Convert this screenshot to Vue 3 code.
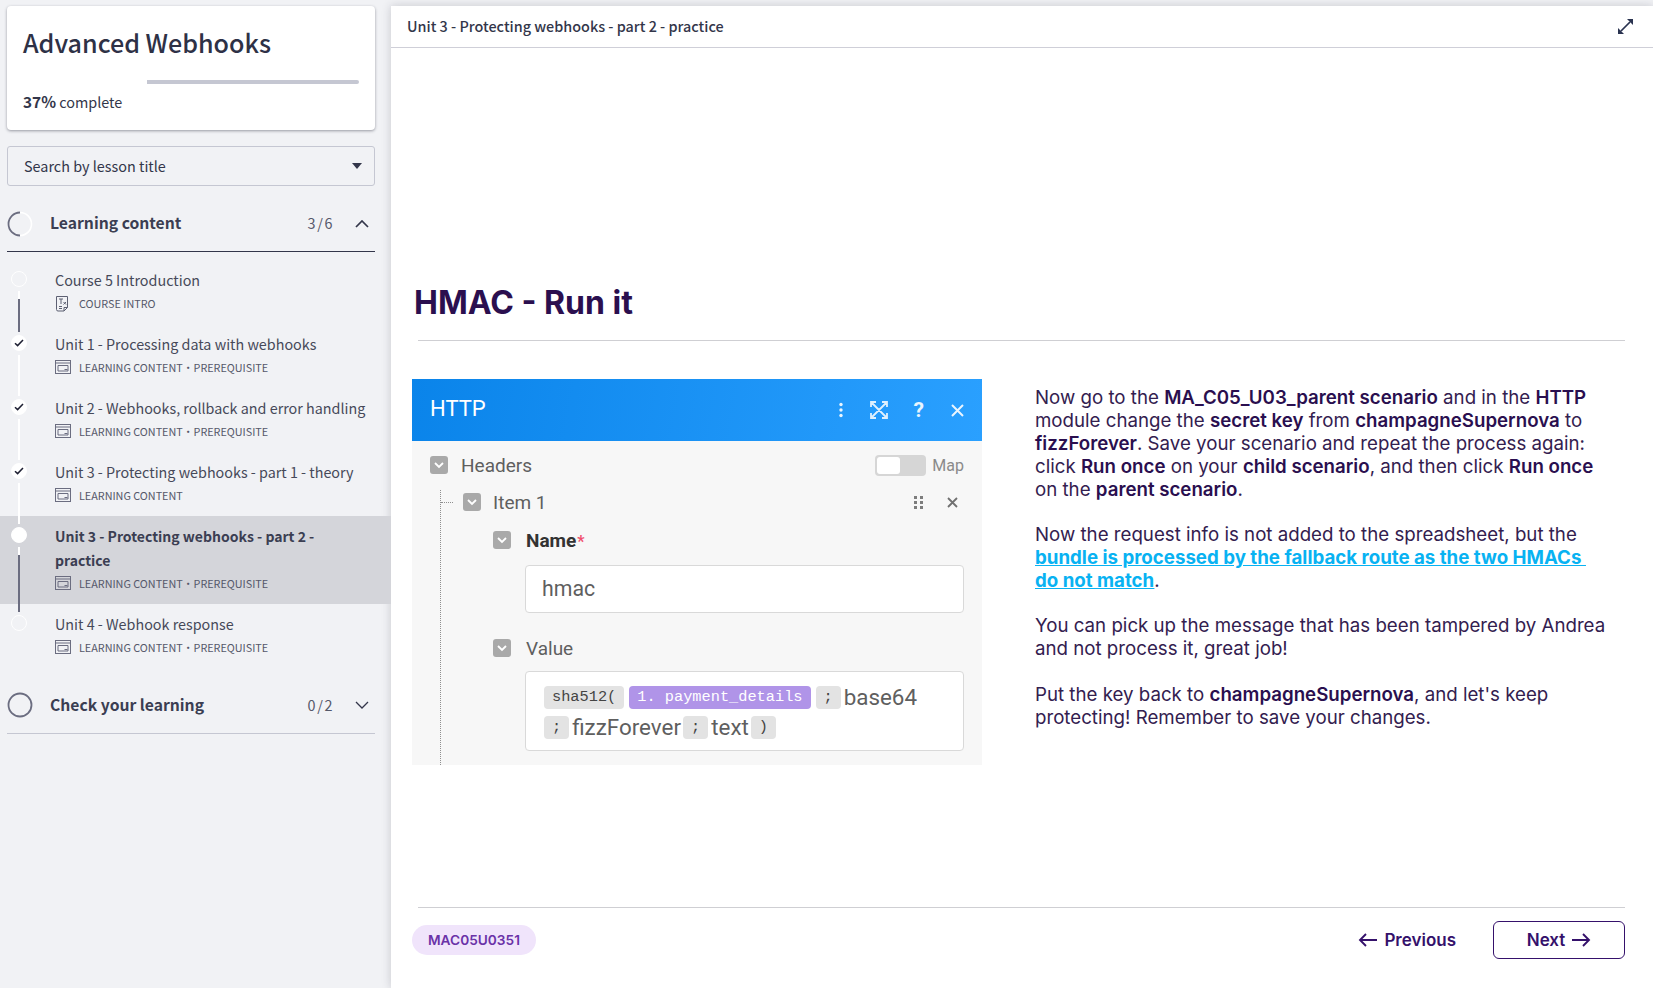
<script setup>
const lessons = [
  { title: 'Course 5 Introduction', meta: ['COURSE INTRO'], icon: 'doc', state: 'open', line: 'dark' },
  { title: 'Unit 1 - Processing data with webhooks', meta: ['LEARNING CONTENT', 'PREREQUISITE'], icon: 'lesson', state: 'done', line: 'light' },
  { title: 'Unit 2 - Webhooks, rollback and error handling', meta: ['LEARNING CONTENT', 'PREREQUISITE'], icon: 'lesson', state: 'done', line: 'light' },
  { title: 'Unit 3 - Protecting webhooks - part 1 - theory', meta: ['LEARNING CONTENT'], icon: 'lesson', state: 'done', line: 'light' },
  { title: 'Unit 3 - Protecting webhooks - part 2 - practice', meta: ['LEARNING CONTENT', 'PREREQUISITE'], icon: 'lesson', state: 'current', line: 'dark', active: true },
  { title: 'Unit 4 - Webhook response', meta: ['LEARNING CONTENT', 'PREREQUISITE'], icon: 'lesson', state: 'open', line: 'none' }
]
</script>

<template>
  <div class="page">
    <aside class="sidebar">
      <section class="card">
        <h2 class="course">Advanced Webhooks</h2>
        <div class="track"><div class="done-part"></div><div class="rest-part"></div></div>
        <p class="percent"><b>37%</b> complete</p>
      </section>

      <div class="select">
        <span class="nudge">Search by lesson title</span>
        <svg width="10" height="6" viewBox="0 0 10 6"><path d="M0 0h10L5 6z" fill="#33364a" /></svg>
      </div>

      <div class="section-head open">
        <svg class="ring" width="26" height="26" viewBox="0 0 26 26">
          <circle cx="13" cy="13" r="11.5" fill="none" stroke="#fff" stroke-width="1.6" />
          <path d="M13 24.5A11.5 11.5 0 0 1 13 1.5" fill="none" stroke="#6b6d80" stroke-width="1.8" />
        </svg>
        <span class="section-title nudge">Learning content</span>
        <span class="count nudge">3/6</span>
        <svg class="chev" width="14" height="8" viewBox="0 0 14 8"><path d="M1 7l6-6 6 6" fill="none" stroke="#33364a" stroke-width="1.7" /></svg>
      </div>

      <ul class="lessons">
        <li v-for="l in lessons" :key="l.title" class="lesson" :class="{ active: l.active }">
          <div class="rail">
            <span class="dot" :class="l.state">
              <svg v-if="l.state === 'done'" width="10" height="8" viewBox="0 0 10 8"><path d="M1 4.2l2.6 2.4L9 1" fill="none" stroke="#1e2033" stroke-width="1.5" /></svg>
            </span>
            <span v-if="l.line !== 'none'" class="line" :class="l.line"></span>
          </div>
          <div class="lesson-body">
            <div class="lesson-title">{{ l.title }}</div>
            <div class="meta">
              <svg v-if="l.icon === 'doc'" class="meta-icon doc" width="16" height="17" viewBox="0 0 16 17" fill="none" stroke="#5d6072" stroke-width="1">
                <path d="M1.500 1.500h11v11l-3.500 3.500H3a1.500 1.500 0 0 1-1.500-1.500z" />
                <path d="M12.500 12.500H9V16" />
                <path d="M4 4h4M6 4v5M8.500 7l2.500 2.500M11 7l-2.500 2.500M4 11.500h3M4 13.500h3" />
              </svg>
              <svg v-else class="meta-icon" width="16" height="14" viewBox="0 0 16 14" fill="none" stroke="#6b6d80" stroke-width="1">
                <rect x="0.500" y="0.500" width="15" height="13" />
                <path d="M0.500 3h15" />
                <path d="M3 5.500h10v5.500H3z" />
                <path d="M9.500 9.500h3" />
              </svg>
              <template v-for="(m, i) in l.meta" :key="m">
                <span v-if="i" class="sep">·</span>
                <span>{{ m }}</span>
              </template>
            </div>
          </div>
        </li>
      </ul>

      <div class="section-head last">
        <svg class="ring" width="26" height="26" viewBox="0 0 26 26">
          <circle cx="13" cy="13" r="11.500" fill="none" stroke="#6b6d80" stroke-width="1.800" />
        </svg>
        <span class="section-title nudge">Check your learning</span>
        <span class="count nudge">0/2</span>
        <svg class="chev" width="14" height="8" viewBox="0 0 14 8"><path d="M1 1l6 6 6-6" fill="none" stroke="#33364a" stroke-width="1.300" /></svg>
      </div>
    </aside>

    <main class="main">
      <header class="topbar">
        <span class="crumb">Unit 3 - Protecting webhooks - part 2 - practice</span>
        <svg width="17" height="17" viewBox="0 0 17 17" fill="none">
          <path d="M4 13L13 4" stroke="#2a3350" stroke-width="1.700" />
          <path d="M10 1h6v6z" fill="#2a3350" />
          <path d="M1 10v6h6z" fill="#2a3350" />
        </svg>
      </header>

      <div class="lesson-page">
        <h1>HMAC - Run it</h1>
        <hr class="rule" />

        <div class="columns">
          <div class="shot">
            <div class="shot-head">
              <span class="shot-title">HTTP</span>
              <span class="shot-icons">
                <svg width="6" height="16" viewBox="0 0 6 16"><g fill="#fff" opacity=".9"><circle cx="3" cy="2.500" r="1.700" /><circle cx="3" cy="8" r="1.700" /><circle cx="3" cy="13.500" r="1.700" /></g></svg>
                <svg class="ic-exp" width="18" height="18" viewBox="0 0 18 18" fill="none" stroke="#fff" stroke-width="1.800" opacity=".85"><path d="M1 6V1h5M12 1h5v5M17 12v5h-5M6 17H1v-5M2 2l14 14M16 2L2 16" /></svg>
                <span class="ic-q">?</span>
                <svg class="ic-x" width="13" height="13" viewBox="0 0 13 13" fill="none" stroke="#fff" stroke-width="2" opacity=".9"><path d="M1 1l11 11M12 1L1 12" /></svg>
              </span>
            </div>

            <div class="shot-body">
              <div class="row headers-row">
                <span class="tick"><svg width="10" height="7" viewBox="0 0 10 7"><path d="M1 1l4 4 4-4" fill="none" stroke="#fff" stroke-width="1.800" /></svg></span>
                <span class="lab">Headers</span>
                <span class="toggle"><i></i></span>
                <span class="map">Map</span>
              </div>

              <div class="tree">
                <div class="row item-row">
                  <span class="dash"></span>
                  <span class="tick"><svg width="10" height="7" viewBox="0 0 10 7"><path d="M1 1l4 4 4-4" fill="none" stroke="#fff" stroke-width="1.800" /></svg></span>
                  <span class="lab">Item 1</span>
                  <svg class="grip" width="9" height="13" viewBox="0 0 9 13"><g fill="#7d7d7d"><rect width="3" height="3" /><rect x="6" width="3" height="3" /><rect y="5" width="3" height="3" /><rect x="6" y="5" width="3" height="3" /><rect y="10" width="3" height="3" /><rect x="6" y="10" width="3" height="3" /></g></svg>
                  <svg class="item-x" width="11" height="11" viewBox="0 0 11 11" fill="none" stroke="#707070" stroke-width="1.800"><path d="M1 1l9 9M10 1l-9 9" /></svg>
                </div>

                <div class="field">
                  <div class="row name-row">
                    <span class="tick"><svg width="10" height="7" viewBox="0 0 10 7"><path d="M1 1l4 4 4-4" fill="none" stroke="#fff" stroke-width="1.800" /></svg></span>
                    <span class="lab strong">Name<em>*</em></span>
                  </div>
                  <div class="input">hmac</div>
                  <div class="row value-row">
                    <span class="tick"><svg width="10" height="7" viewBox="0 0 10 7"><path d="M1 1l4 4 4-4" fill="none" stroke="#fff" stroke-width="1.800" /></svg></span>
                    <span class="lab value-lab">Value</span>
                  </div>
                  <div class="value-box">
                    <div class="chips">
                      <span class="chip">sha512(</span>
                      <span class="chip purple">1. payment_details</span>
                      <span class="chip">;</span>
                      <span class="plain">base64</span>
                    </div>
                    <div class="chips">
                      <span class="chip">;</span>
                      <span class="plain">fizzForever</span>
                      <span class="chip">;</span>
                      <span class="plain">text</span>
                      <span class="chip">)</span>
                    </div>
                  </div>
                </div>
              </div>
            </div>
          </div>

          <div class="copy">
            <p>Now go to the <b>MA_C05_U03_parent scenario</b> and in the <b>HTTP</b><br />module change the <b>secret key</b> from <b>champagneSupernova</b> to<br /><b>fizzForever</b>. Save your scenario and repeat the process again:<br />click <b>Run once</b> on your <b>child scenario</b>, and then click <b>Run once</b><br />on the <b>parent scenario</b>.</p>
            <p>Now the request info is not added to the spreadsheet, but the<br /><a><b>bundle is processed by the fallback route as the two HMACs&nbsp;<br />do not match</b></a>.</p>
            <p>You can pick up the message that has been tampered by Andrea<br />and not process it, great job!</p>
            <p>Put the key back to <b>champagneSupernova</b>, and let's keep<br />protecting! Remember to save your changes.</p>
          </div>
        </div>

        <hr class="rule foot-rule" />
        <footer class="foot">
          <span class="badge">MAC05U0351</span>
          <span class="prev">
            <svg width="20" height="14" viewBox="0 0 20 14" fill="none" stroke="#35116b" stroke-width="1.900"><path d="M19 7H2M8 1L2 7l6 6" /></svg>
            Previous
          </span>
          <span class="next">
            Next
            <svg width="20" height="14" viewBox="0 0 20 14" fill="none" stroke="#35116b" stroke-width="1.900"><path d="M1 7h17M12 1l6 6-6 6" /></svg>
          </span>
        </footer>
      </div>
    </main>
  </div>
</template>

<style>
html, body { margin: 0; background: #f1f2f5; }
</style>

<style scoped>
.page { display: flex; height: 988px; width: 1653px; overflow: hidden; background: #f1f2f5; font-family: "Noto Sans CJK SC", "Noto Sans", sans-serif; color: #33364a; }
.sidebar { width: 391px; flex: none; padding-top: 6px; box-sizing: border-box; }
.card { margin-left: 7px; width: 368px; height: 124px; box-sizing: border-box; background: #fff; border-radius: 4px; box-shadow: 0 1px 3px rgba(40, 42, 60, .45); padding: 0 16px; overflow: hidden; }
.course { margin: 18px 0 0; font-size: 25.100px; line-height: 37px; font-weight: 500; color: #2e3146; }
.track { display: flex; height: 4px; margin-top: 19px; border-radius: 2px; }
.done-part { width: 124px; background: #fff; }
.rest-part { flex: 1; background: #c5c7d2; border-radius: 0 2px 2px 0; }
.percent { margin: 6px 0 0; font-size: 14.400px; line-height: 22px; }
.percent b { font-weight: 700; font-size: 15.400px; }
.select { margin: 16px 0 0 7px; width: 368px; height: 40px; box-sizing: border-box; border: 1px solid #c5c7d2; border-radius: 3px; display: flex; align-items: center; justify-content: space-between; padding: 0 12px 0 16px; font-size: 14.400px; }
.nudge { margin-top: -2px; }
.section-head { margin-left: 7px; width: 368px; height: 56px; box-sizing: border-box; border-bottom: 1px solid #c5c7d2; display: flex; align-items: center; }
.section-head.open { margin-top: 10px; border-bottom-color: #33364a; }
.section-head.last { height: 57px; }
.ring { flex: none; margin-right: 17px; }
.section-title { font-size: 15.700px; font-weight: 700; flex: 1; color: #3b3e52; }
.count { font-size: 14.400px; letter-spacing: 1.600px; color: #55586a; margin-right: 21px; }
.chev { margin-right: 6px; }
.lessons { list-style: none; margin: 0; padding: 8px 0 9px; }
.lesson { display: flex; position: relative; }
.lesson.active { background: #d4d5da; }
.rail { width: 55px; flex: none; display: flex; flex-direction: column; align-items: center; padding: 11px 17px 0 0; box-sizing: border-box; }
.dot { width: 16px; height: 16px; flex: none; box-sizing: border-box; border-radius: 50%; background: transparent; border: 1px solid #fff; display: flex; align-items: center; justify-content: center; }
.dot.done, .dot.current { background: #fff; }
.line { width: 2px; flex: 1; margin: 4px 0 -8px; background: #fff; position: relative; z-index: 1; }
.line.dark { background: linear-gradient(#fff 0 8px, #6b6d80 8px); }
.lesson-body { padding: 8px 16px 12px 0; flex: 1; min-width: 0; }
.lesson-title { font-size: 14.350px; line-height: 24px; color: #464959; }
.active .lesson-title { font-size: 14px; font-weight: 700; color: #3b3e52; padding-right: 40px; }
.meta { margin-top: 2px; display: flex; align-items: center; height: 18px; font-size: 10.800px; color: #55586a; }
.meta-icon { margin-right: 8px; flex: none; }
.sep { margin: 0; }

.main { flex: 1; margin-top: 6px; min-width: 0; background: #fff; box-shadow: 0 0 9px rgba(50, 52, 70, .22); display: flex; flex-direction: column; }
.topbar { height: 42px; flex: none; box-sizing: border-box; border-bottom: 1px solid #cfcfd8; display: flex; align-items: center; justify-content: space-between; padding: 0 19px 0 16px; font-size: 14.400px; font-weight: 500; color: #33364a; }
.crumb { margin-top: -2px; }
.lesson-page { flex: 1; display: flex; flex-direction: column; padding: 0 28px 0 21px; font-family: Inter, sans-serif; color: #2d1152; }
h1 { margin: 235px 0 0 2px; font-size: 32px; line-height: 40px; font-weight: 700; color: #2b0f4f; }
.rule { margin: 17px 0 0 6px; border: 0; border-top: 1px solid #cfcfd3; }
.columns { display: flex; margin-top: 38px; height: 528px; }
.shot { width: 570px; height: 386px; flex: none; background: #f7f7f7; font-family: Roboto, Inter, sans-serif; color: #5f5f5f; }
.shot-head { height: 62px; background: linear-gradient(100deg, #0a84ea, #2aa0ff); color: #fff; display: flex; align-items: center; justify-content: space-between; padding: 0 18px 0 18px; }
.shot-title { font-size: 22px; margin-top: -4px; }
.shot-icons { display: flex; align-items: center; }
.ic-exp { margin-left: 26px; }
.ic-q { margin-left: 26px; font-size: 21px; font-weight: 700; opacity: .9; }
.ic-x { margin-left: 27px; }
.shot-body { padding: 0 18px 0 18px; }
.row { display: flex; align-items: center; }
.tick { width: 18px; height: 18px; flex: none; border-radius: 3px; background: #a9a9a9; display: flex; align-items: center; justify-content: center; }
.lab { font-size: 19px; margin-left: 13px; }
.strong { font-weight: 700; color: #333; margin-left: 15px; }
.strong em { color: #f0506e; font-style: normal; font-size: 16px; margin-left: 1px; }
.value-lab { margin-left: 15px; }
.headers-row { height: 24px; margin-top: 12px; }
.headers-row .lab { flex: 1; }
.toggle { width: 51px; height: 21px; box-sizing: border-box; border-radius: 4px; background: #d6d6d6; padding: 2px; }
.toggle i { display: block; width: 23px; height: 17px; border-radius: 3px; background: #fff; }
.map { font-size: 16px; margin-left: 6px; color: #8a8a8a; }
.tree { margin: 13px 0 0 10px; height: 275px; border-left: 1px dotted #8f8f8f; }
.item-row { height: 24px; }
.dash { width: 12px; border-top: 1px dotted #8f8f8f; margin-right: 10px; }
.item-row .lab { flex: 1; margin-left: 12px; }
.grip { margin-right: 24px; }
.item-x { margin-right: 6px; }
.field { margin-left: 52px; }
.name-row { height: 24px; margin-top: 14px; }
.name-row .tick, .value-row .tick { margin-left: 0; }
.input { margin: 13px 0 0 32px; width: 439px; height: 48px; box-sizing: border-box; background: #fff; border: 1px solid #d9d9d9; border-radius: 4px; font-size: 21.300px; line-height: 46px; padding-left: 16px; }
.value-row { height: 24px; margin-top: 23px; }
.value-box { margin: 11px 0 0 32px; width: 439px; height: 80px; box-sizing: border-box; background: #fff; border: 1px solid #d9d9d9; border-radius: 4px; padding: 14px 0 0 18px; }
.chips { display: flex; align-items: center; height: 23px; margin-bottom: 7px; }
.chip { height: 23px; min-width: 25px; box-sizing: border-box; padding: 0 8px; margin-right: 5px; border-radius: 4px; background: #e3e3e3; font-family: "Liberation Mono", monospace; font-size: 15.300px; line-height: 23px; color: #444; text-align: center; white-space: nowrap; }
.purple { background: #b094e8; color: #fff; }
.plain { font-size: 22.400px; margin: -2px 2px 0 -2px; }
.copy { margin-left: 53px; font-size: 18.700px; line-height: 22.900px; padding-top: 8px; white-space: nowrap; color: #33204f; }
.copy p { margin: 0 0 22.600px; }
.copy b { font-weight: 600; color: #2a0f4f; }
.copy a, .copy a b { color: #08b2f2; font-weight: 700; text-decoration: underline; }
.foot-rule { margin-top: 0; }
.foot { display: flex; align-items: center; height: 38px; margin-top: 13px; font-weight: 600; font-size: 17px; color: #35116b; }
.badge { width: 124px; height: 30px; border-radius: 15px; background: #f0e4fb; display: flex; align-items: center; justify-content: center; font-size: 13.700px; font-weight: 600; color: #6a32a8; margin-right: auto; }
.prev { display: flex; align-items: center; gap: 6px; margin-right: 37px; }
.next { width: 132px; height: 38px; box-sizing: border-box; border: 1.500px solid #35116b; border-radius: 6px; display: flex; align-items: center; justify-content: center; gap: 6px; }
</style>
